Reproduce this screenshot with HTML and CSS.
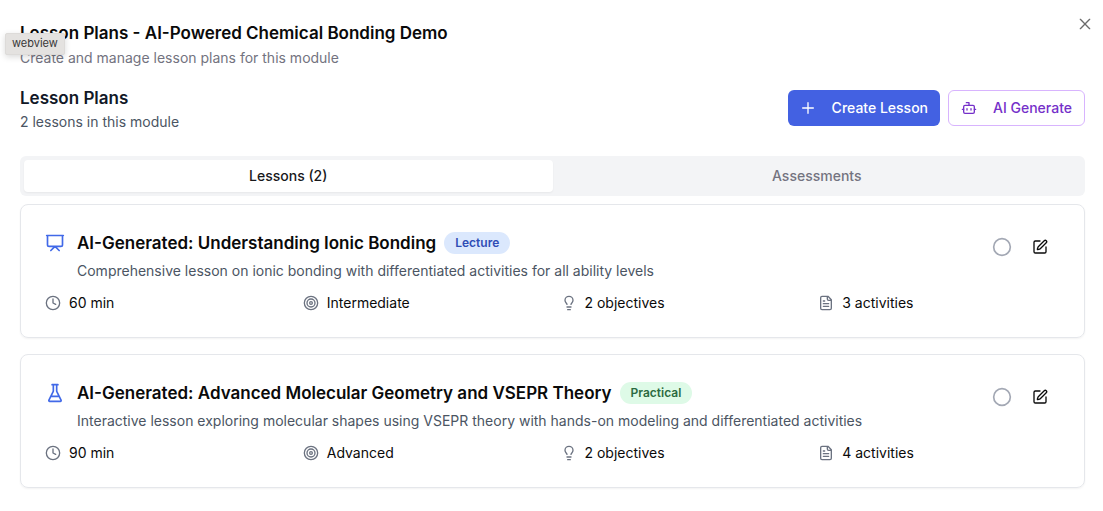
FILE: index.html
```html
<!DOCTYPE html>
<html lang="en">
<head>
<meta charset="utf-8">
<title>Lesson Plans</title>
<link rel="stylesheet" href="styles.css">
</head>
<body>
<svg class="sprite" aria-hidden="true">
  <symbol id="i-clock" viewBox="0 0 24 24"><circle cx="12" cy="12" r="10"/><path d="M12 6v6l4 2"/></symbol>
  <symbol id="i-target" viewBox="0 0 24 24"><circle cx="12" cy="12" r="10"/><circle cx="12" cy="12" r="6"/><circle cx="12" cy="12" r="2"/></symbol>
  <symbol id="i-bulb" viewBox="0 0 24 24"><path d="M15 14c.2-1 .7-1.700 1.500-2.500 1-.9 1.500-2.200 1.500-3.500A6 6 0 0 0 6 8c0 1 .2 2.200 1.500 3.500.7.700 1.300 1.500 1.500 2.500M9 18h6M10 22h4"/></symbol>
  <symbol id="i-file" viewBox="0 0 24 24"><path d="M15 2H6a2 2 0 0 0-2 2v16a2 2 0 0 0 2 2h12a2 2 0 0 0 2-2V7ZM14 2v4a2 2 0 0 0 2 2h4M10 9H8M16 13H8M16 17H8"/></symbol>
  <symbol id="i-edit" viewBox="0 0 24 24"><path d="M12 3H5a2 2 0 0 0-2 2v14a2 2 0 0 0 2 2h14a2 2 0 0 0 2-2v-7M18.375 2.625a1 1 0 0 1 3 3l-9.013 9.014a2 2 0 0 1-.853.505l-2.873.840a.5.5 0 0 1-.620-.620l.840-2.873a2 2 0 0 1 .506-.852Z"/></symbol>
  <symbol id="i-circle" viewBox="0 0 24 24"><circle cx="12" cy="12" r="10"/></symbol>
</svg>

<main class="dialog">
  <button class="close" type="button" aria-label="Close">
    <svg class="icon" viewBox="0 0 24 24"><path d="M19 5 5 19M5 5l14 14"/></svg>
  </button>
  <div class="tooltip" role="tooltip">webview</div>

  <header class="dialog-header">
    <h1 class="dialog-title">Lesson Plans - AI-Powered Chemical Bonding Demo</h1>
    <p class="dialog-text">Create and manage lesson plans for this module</p>
  </header>

  <section class="toolbar">
    <div>
      <h2 class="section-title">Lesson Plans</h2>
      <p class="section-text">2 lessons in this module</p>
    </div>
    <div class="toolbar-actions">
      <button class="button button-primary" type="button">
        <svg class="icon" viewBox="0 0 24 24"><path d="M4 12h16M12 4v16"/></svg>
        Create Lesson
      </button>
      <button class="button button-outline" type="button">
        <svg class="icon" viewBox="0 0 24 24"><path d="M12 8V4H8M2 14h2M20 14h2M15 13v2M9 13v2"/><rect x="4" y="8" width="16" height="12" rx="2"/></svg>
        AI Generate
      </button>
    </div>
  </section>

  <div class="tabs" role="tablist">
    <button class="tab tab-active" type="button" role="tab" aria-selected="true">Lessons (2)</button>
    <button class="tab" type="button" role="tab" aria-selected="false">Assessments</button>
  </div>

  <div class="lessons">
    <article class="card">
      <div class="card-head">
        <svg class="icon icon-kind" viewBox="0 0 24 24"><path d="M2 3h20M21 3v11a2 2 0 0 1-2 2H5a2 2 0 0 1-2-2V3M7 21l5-5 5 5"/></svg>
        <div class="card-info">
          <div class="card-heading">
            <h3 class="card-title">AI-Generated: Understanding Ionic Bonding</h3>
            <span class="badge badge-lecture">Lecture</span>
          </div>
          <p class="card-text">Comprehensive lesson on ionic bonding with differentiated activities for all ability levels</p>
        </div>
        <div class="card-actions">
          <button class="status" type="button" aria-label="Mark complete"><svg class="icon"><use href="#i-circle"/></svg></button>
          <button class="edit" type="button" aria-label="Edit lesson"><svg class="icon"><use href="#i-edit"/></svg></button>
        </div>
      </div>
      <ul class="stats">
        <li class="stat"><svg class="icon"><use href="#i-clock"/></svg>60 min</li>
        <li class="stat"><svg class="icon"><use href="#i-target"/></svg>Intermediate</li>
        <li class="stat"><svg class="icon"><use href="#i-bulb"/></svg>2 objectives</li>
        <li class="stat"><svg class="icon"><use href="#i-file"/></svg>3 activities</li>
      </ul>
    </article>

    <article class="card">
      <div class="card-head">
        <svg class="icon icon-kind" viewBox="0 0 24 24"><path d="M10 2v7.527a2 2 0 0 1-.211.896L4.720 20.550a1 1 0 0 0 .900 1.450h12.760a1 1 0 0 0 .900-1.450l-5.069-10.127A2 2 0 0 1 14 9.527V2M8.500 2h7M7 16h10"/></svg>
        <div class="card-info">
          <div class="card-heading">
            <h3 class="card-title">AI-Generated: Advanced Molecular Geometry and VSEPR Theory</h3>
            <span class="badge badge-practical">Practical</span>
          </div>
          <p class="card-text">Interactive lesson exploring molecular shapes using VSEPR theory with hands-on modeling and differentiated activities</p>
        </div>
        <div class="card-actions">
          <button class="status" type="button" aria-label="Mark complete"><svg class="icon"><use href="#i-circle"/></svg></button>
          <button class="edit" type="button" aria-label="Edit lesson"><svg class="icon"><use href="#i-edit"/></svg></button>
        </div>
      </div>
      <ul class="stats">
        <li class="stat"><svg class="icon"><use href="#i-clock"/></svg>90 min</li>
        <li class="stat"><svg class="icon"><use href="#i-target"/></svg>Advanced</li>
        <li class="stat"><svg class="icon"><use href="#i-bulb"/></svg>2 objectives</li>
        <li class="stat"><svg class="icon"><use href="#i-file"/></svg>4 activities</li>
      </ul>
    </article>
  </div>
</main>
</body>
</html>
```
FILE: styles.css
```css
* {
  box-sizing: border-box;
  margin: 0;
  padding: 0;
}

body {
  background: #fff;
  color: #0a0a0a;
  font: 14px/20px Inter, "Liberation Sans", sans-serif;
}

button {
  border: 0;
  background: none;
  color: inherit;
  font: inherit;
  cursor: pointer;
}

.sprite {
  display: none;
}

.icon {
  width: 16px;
  height: 16px;
  flex: none;
  display: block;
  fill: none;
  stroke: currentColor;
  stroke-width: 2;
  stroke-linecap: round;
  stroke-linejoin: round;
}

.dialog {
  position: relative;
  padding: 24px 18px 23px 20px;
}

.close {
  position: absolute;
  top: 16px;
  right: 10px;
  color: #6b6b6b;
}

.tooltip {
  position: absolute;
  top: 33px;
  left: 5px;
  padding: 2px 6px 3px;
  border: 1px solid #dddbd9;
  border-radius: 2px;
  background: #e4e2e0;
  color: #383838;
  font-size: 11px;
  line-height: 15px;
  box-shadow: 0 2px 6px rgba(0, 0, 0, 0.15);
}

.dialog-header {
  margin-bottom: 16px;
}

.dialog-title {
  margin-bottom: 6px;
  font-size: 17px;
  font-weight: 600;
  line-height: 18px;
}

.dialog-text {
  color: #737380;
}

.toolbar {
  display: flex;
  align-items: center;
  justify-content: space-between;
  margin-bottom: 24px;
}

.section-title {
  color: #111827;
  font-size: 17px;
  font-weight: 600;
  line-height: 28px;
}

.section-text {
  color: #4b5563;
}

.toolbar-actions {
  display: flex;
  gap: 8px;
}

.button {
  display: flex;
  align-items: center;
  gap: 16px;
  height: 36px;
  padding: 0 12px;
  border-radius: 6px;
  font-weight: 500;
}

.button-primary {
  background: #4361e2;
  color: #fff;
}

.button-outline {
  border: 1px solid #d8b4fe;
  color: #7530c9;
}

.tabs {
  display: grid;
  grid-template-columns: 1fr 1fr;
  padding: 4px;
  margin-bottom: 8px;
  border-radius: 6px;
  background: #f3f4f6;
}

.tab {
  height: 32px;
  border-radius: 4px;
  color: #737380;
  font-weight: 500;
}

.tab-active {
  background: #fff;
  color: #18181b;
  box-shadow: 0 1px 2px rgba(0, 0, 0, 0.05);
}

.lessons {
  display: grid;
  gap: 16px;
}

.card {
  padding: 24px;
  border: 1px solid #e5e7eb;
  border-radius: 8px;
  box-shadow: 0 1px 2px rgba(0, 0, 0, 0.05);
}

.card-head {
  display: flex;
  gap: 12px;
  margin-bottom: 12px;
}

.icon-kind {
  width: 20px;
  height: 20px;
  margin-top: 4px;
  color: #4169e8;
}

.card-info {
  flex: 1;
}

.card-heading {
  display: flex;
  align-items: center;
  gap: 8px;
  margin-bottom: 4px;
}

.card-title {
  font-size: 17px;
  font-weight: 600;
  line-height: 28px;
}

.card-text {
  color: #4b5563;
}

.badge {
  padding: 3px 11px;
  border-radius: 11px;
  font-size: 12px;
  font-weight: 600;
  line-height: 16px;
}

.badge-lecture {
  background: #dbe8fd;
  color: #2f4db5;
}

.badge-practical {
  background: #defae7;
  color: #2b6a41;
}

.card-actions {
  display: flex;
  align-items: center;
  gap: 8px;
  height: 36px;
}

.status {
  color: #a3a8b4;
}

.status .icon {
  width: 20px;
  height: 20px;
}

.edit {
  padding: 10px 12px;
}

.stats {
  display: grid;
  grid-template-columns: repeat(4, 1fr);
  gap: 16px;
  list-style: none;
}

.stat {
  display: flex;
  align-items: center;
  gap: 8px;
}

.stat .icon {
  color: #6b7280;
}
```
